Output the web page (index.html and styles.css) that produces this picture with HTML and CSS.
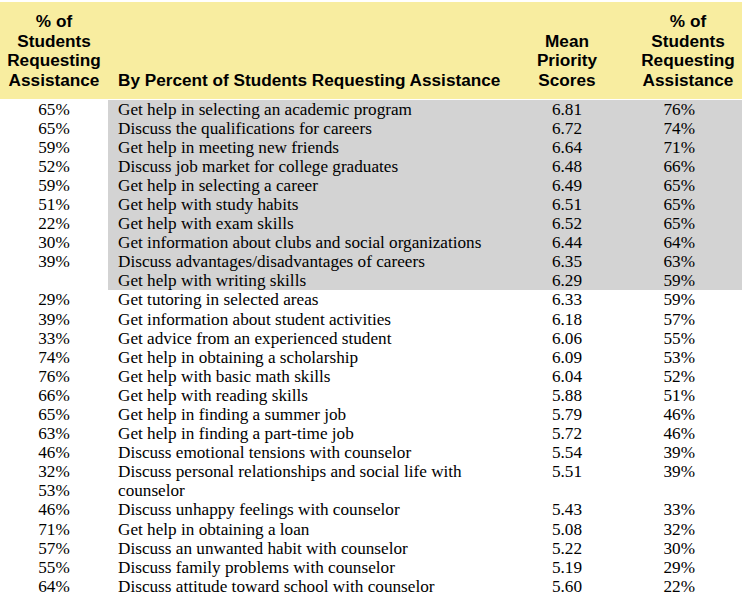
FILE: index.html
```html
<!DOCTYPE html>
<html>
<head>
<meta charset="utf-8">
<link rel="stylesheet" href="styles.css">
</head>
<body>
<div class="page">
  <div class="head">
    <div class="h h1">% of<br>Students<br>Requesting<br>Assistance</div>
    <div class="h h2">By Percent of Students Requesting Assistance</div>
    <div class="h h3">Mean<br>Priority<br>Scores</div>
    <div class="h h4">% of<br>Students<br>Requesting<br>Assistance</div>
  </div>
  <div class="body">
    <div class="left">
      <div>65%</div><div>65%</div><div>59%</div><div>52%</div><div>59%</div><div>51%</div><div>22%</div><div>30%</div><div>39%</div><div>&nbsp;</div>
      <div>29%</div><div>39%</div><div>33%</div><div>74%</div><div>76%</div><div>66%</div><div>65%</div><div>63%</div><div>46%</div><div>32%</div>
      <div>53%</div><div>46%</div><div>71%</div><div>57%</div><div>55%</div><div>64%</div>
    </div>
    <div class="rows">
      <div class="shade">
        <div class="row"><div class="t">Get help in selecting an academic program</div><div class="m">6.81</div><div class="p">76%</div></div>
        <div class="row"><div class="t">Discuss the qualifications for careers</div><div class="m">6.72</div><div class="p">74%</div></div>
        <div class="row"><div class="t">Get help in meeting new friends</div><div class="m">6.64</div><div class="p">71%</div></div>
        <div class="row"><div class="t">Discuss job market for college graduates</div><div class="m">6.48</div><div class="p">66%</div></div>
        <div class="row"><div class="t">Get help in selecting a career</div><div class="m">6.49</div><div class="p">65%</div></div>
        <div class="row"><div class="t">Get help with study habits</div><div class="m">6.51</div><div class="p">65%</div></div>
        <div class="row"><div class="t">Get help with exam skills</div><div class="m">6.52</div><div class="p">65%</div></div>
        <div class="row"><div class="t">Get information about clubs and social organizations</div><div class="m">6.44</div><div class="p">64%</div></div>
        <div class="row"><div class="t">Discuss advantages/disadvantages of careers</div><div class="m">6.35</div><div class="p">63%</div></div>
        <div class="row"><div class="t">Get help with writing skills</div><div class="m">6.29</div><div class="p">59%</div></div>
      </div>
      <div class="row"><div class="t">Get tutoring in selected areas</div><div class="m">6.33</div><div class="p">59%</div></div>
      <div class="row"><div class="t">Get information about student activities</div><div class="m">6.18</div><div class="p">57%</div></div>
      <div class="row"><div class="t">Get advice from an experienced student</div><div class="m">6.06</div><div class="p">55%</div></div>
      <div class="row"><div class="t">Get help in obtaining a scholarship</div><div class="m">6.09</div><div class="p">53%</div></div>
      <div class="row"><div class="t">Get help with basic math skills</div><div class="m">6.04</div><div class="p">52%</div></div>
      <div class="row"><div class="t">Get help with reading skills</div><div class="m">5.88</div><div class="p">51%</div></div>
      <div class="row"><div class="t">Get help in finding a summer job</div><div class="m">5.79</div><div class="p">46%</div></div>
      <div class="row"><div class="t">Get help in finding a part-time job</div><div class="m">5.72</div><div class="p">46%</div></div>
      <div class="row"><div class="t">Discuss emotional tensions with counselor</div><div class="m">5.54</div><div class="p">39%</div></div>
      <div class="row"><div class="t">Discuss personal relationships and social life with counselor</div><div class="m">5.51</div><div class="p">39%</div></div>
      <div class="row"><div class="t">Discuss unhappy feelings with counselor</div><div class="m">5.43</div><div class="p">33%</div></div>
      <div class="row"><div class="t">Get help in obtaining a loan</div><div class="m">5.08</div><div class="p">32%</div></div>
      <div class="row"><div class="t">Discuss an unwanted habit with counselor</div><div class="m">5.22</div><div class="p">30%</div></div>
      <div class="row"><div class="t">Discuss family problems with counselor</div><div class="m">5.19</div><div class="p">29%</div></div>
      <div class="row"><div class="t">Discuss attitude toward school with counselor</div><div class="m">5.60</div><div class="p">22%</div></div>
    </div>
  </div>
</div>
</body>
</html>
```

FILE: styles.css
```css
html, body {
  margin: 0;
  padding: 0;
  background: #ffffff;
}
.page {
  width: 742px;
  padding-top: 2px;
  color: #000;
}
.head {
  display: grid;
  grid-template-columns: 108px 400px 118px 116px;
  align-items: end;
  background: #f8eda0;
  height: 97px;
  box-sizing: border-box;
  padding-bottom: 8px;
  font-family: "Liberation Sans", Arial, sans-serif;
  font-weight: bold;
  font-size: 17.2px;
  line-height: 19.8px;
}
.h {
  text-align: center;
}
.h2 {
  text-align: left;
  padding-left: 10px;
  white-space: nowrap;
}
.h4 {
  padding-left: 8px;
}
.body {
  display: flex;
  padding-top: 0.5px;
  font-family: "Liberation Serif", "Times New Roman", serif;
  font-size: 17.2px;
  line-height: 19.1px;
}
.left {
  width: 108px;
  flex: none;
  text-align: center;
}
.left div {
  height: 19.1px;
}
.rows {
  flex: 1;
}
.shade {
  background: #d3d3d3;
}
.row {
  display: grid;
  grid-template-columns: 400px 118px 116px;
}
.t {
  padding-left: 10px;
}
.m {
  text-align: center;
}
.p {
  text-align: right;
  padding-right: 47px;
}
```
